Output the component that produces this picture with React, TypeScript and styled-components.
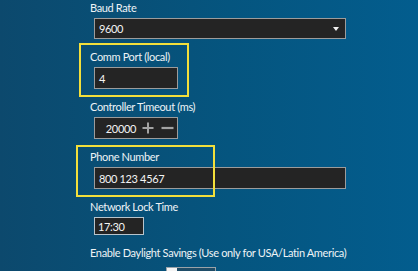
import React from 'react';
import styled, { createGlobalStyle } from 'styled-components';

const GlobalStyle = createGlobalStyle`
  html, body {
    margin: 0;
    padding: 0;
  }
  body {
    width: 418px;
    height: 271px;
    overflow: hidden;
    font-family: Lato, 'Noto Sans', sans-serif;
  }
`;

const Page = styled.div`
  width: 418px;
  height: 271px;
  background: linear-gradient(90deg, #0c496d 0%, #05557f 55%, #035d8e 100%);
  overflow: hidden;
`;

const Form = styled.div`
  position: relative;
  display: flex;
  flex-direction: column;
  gap: 10px;
  padding: 0 0 0 90px;
`;

const Field = styled.div`
  display: flex;
  flex-direction: column;
  gap: 2px;
`;

const Label = styled.div`
  font-size: 11px;
  line-height: 16px;
  letter-spacing: -0.35px;
  color: #eef3f6;
  white-space: nowrap;
`;

const Box = styled.div<{ $width: number; $height?: number }>`
  box-sizing: border-box;
  width: ${(p) => p.$width}px;
  height: ${(p) => p.$height ?? 22}px;
  margin-left: 4px;
  display: flex;
  align-items: center;
  padding: 0 4px;
  background: #242424;
  border: 1px solid #9c9c9c;
  color: #f4f4f4;
  font-size: 11px;
  letter-spacing: -0.35px;
`;

const SelectBox = styled(Box)`
  justify-content: space-between;
  padding-right: 6px;
`;

const Arrow = styled.span`
  width: 0;
  height: 0;
  border-left: 3.5px solid transparent;
  border-right: 3.5px solid transparent;
  border-top: 4px solid #f0f0f0;
`;

const NumberBox = styled(Box)`
  justify-content: flex-end;
  gap: 6px;
  padding-right: 3px;
`;

const Stepper = styled.div`
  display: flex;
  gap: 7px;
  align-items: center;
`;

const TimeBox = styled(Box)`
  padding: 0 3px;
  border-color: #b8c4cc;
`;

const Toggle = styled.div`
  box-sizing: border-box;
  width: 50px;
  height: 16px;
  margin-left: 76px;
  margin-top: 4px;
  border: 1px solid #9aa3a9;
  background: #1f4d68;
  display: flex;
`;

const Thumb = styled.div`
  width: 10px;
  height: 100%;
  background: #f4f4f4;
`;

const Highlight = styled.div<{ $x: number; $y: number; $w: number; $h: number }>`
  position: absolute;
  left: ${(p) => p.$x}px;
  top: ${(p) => p.$y}px;
  width: ${(p) => p.$w}px;
  height: ${(p) => p.$h}px;
  box-sizing: border-box;
  border: 2.5px solid #f3df3b;
  pointer-events: none;
`;

const PlusIcon = () => (
  <svg width="12" height="12" viewBox="0 0 12 12">
    <path d="M6 0.5V11.5M0.5 6H11.5" stroke="#a3a3a3" strokeWidth="2" />
  </svg>
);

const MinusIcon = () => (
  <svg width="13" height="12" viewBox="0 0 13 12">
    <path d="M0.5 6H12.5" stroke="#a3a3a3" strokeWidth="2.2" />
  </svg>
);

const App = () => {
  return (
    <Page>
      <GlobalStyle />
      <Form>
        <Field>
          <Label>Baud Rate</Label>
          <SelectBox $width={252} $height={21}>
            <span>9600</span>
            <Arrow />
          </SelectBox>
        </Field>
        <Field>
          <Label>Comm Port (local)</Label>
          <Box $width={84}>4</Box>
        </Field>
        <Field>
          <Label>Controller Timeout (ms)</Label>
          <NumberBox $width={84}>
            <span>20000</span>
            <Stepper>
              <PlusIcon />
              <MinusIcon />
            </Stepper>
          </NumberBox>
        </Field>
        <Field>
          <Label>Phone Number</Label>
          <Box $width={252}>800 123 4567</Box>
        </Field>
        <Field>
          <Label>Network Lock Time</Label>
          <TimeBox $width={50} $height={18}>17:30</TimeBox>
        </Field>
        <Field>
          <Label>Enable Daylight Savings (Use only for USA/Latin America)</Label>
          <Toggle>
            <Thumb />
          </Toggle>
        </Field>
        <Highlight $x={79} $y={43} $w={110} $h={54} />
        <Highlight $x={76} $y={145} $w={139} $h={52} />
      </Form>
    </Page>
  );
};

export default App;
